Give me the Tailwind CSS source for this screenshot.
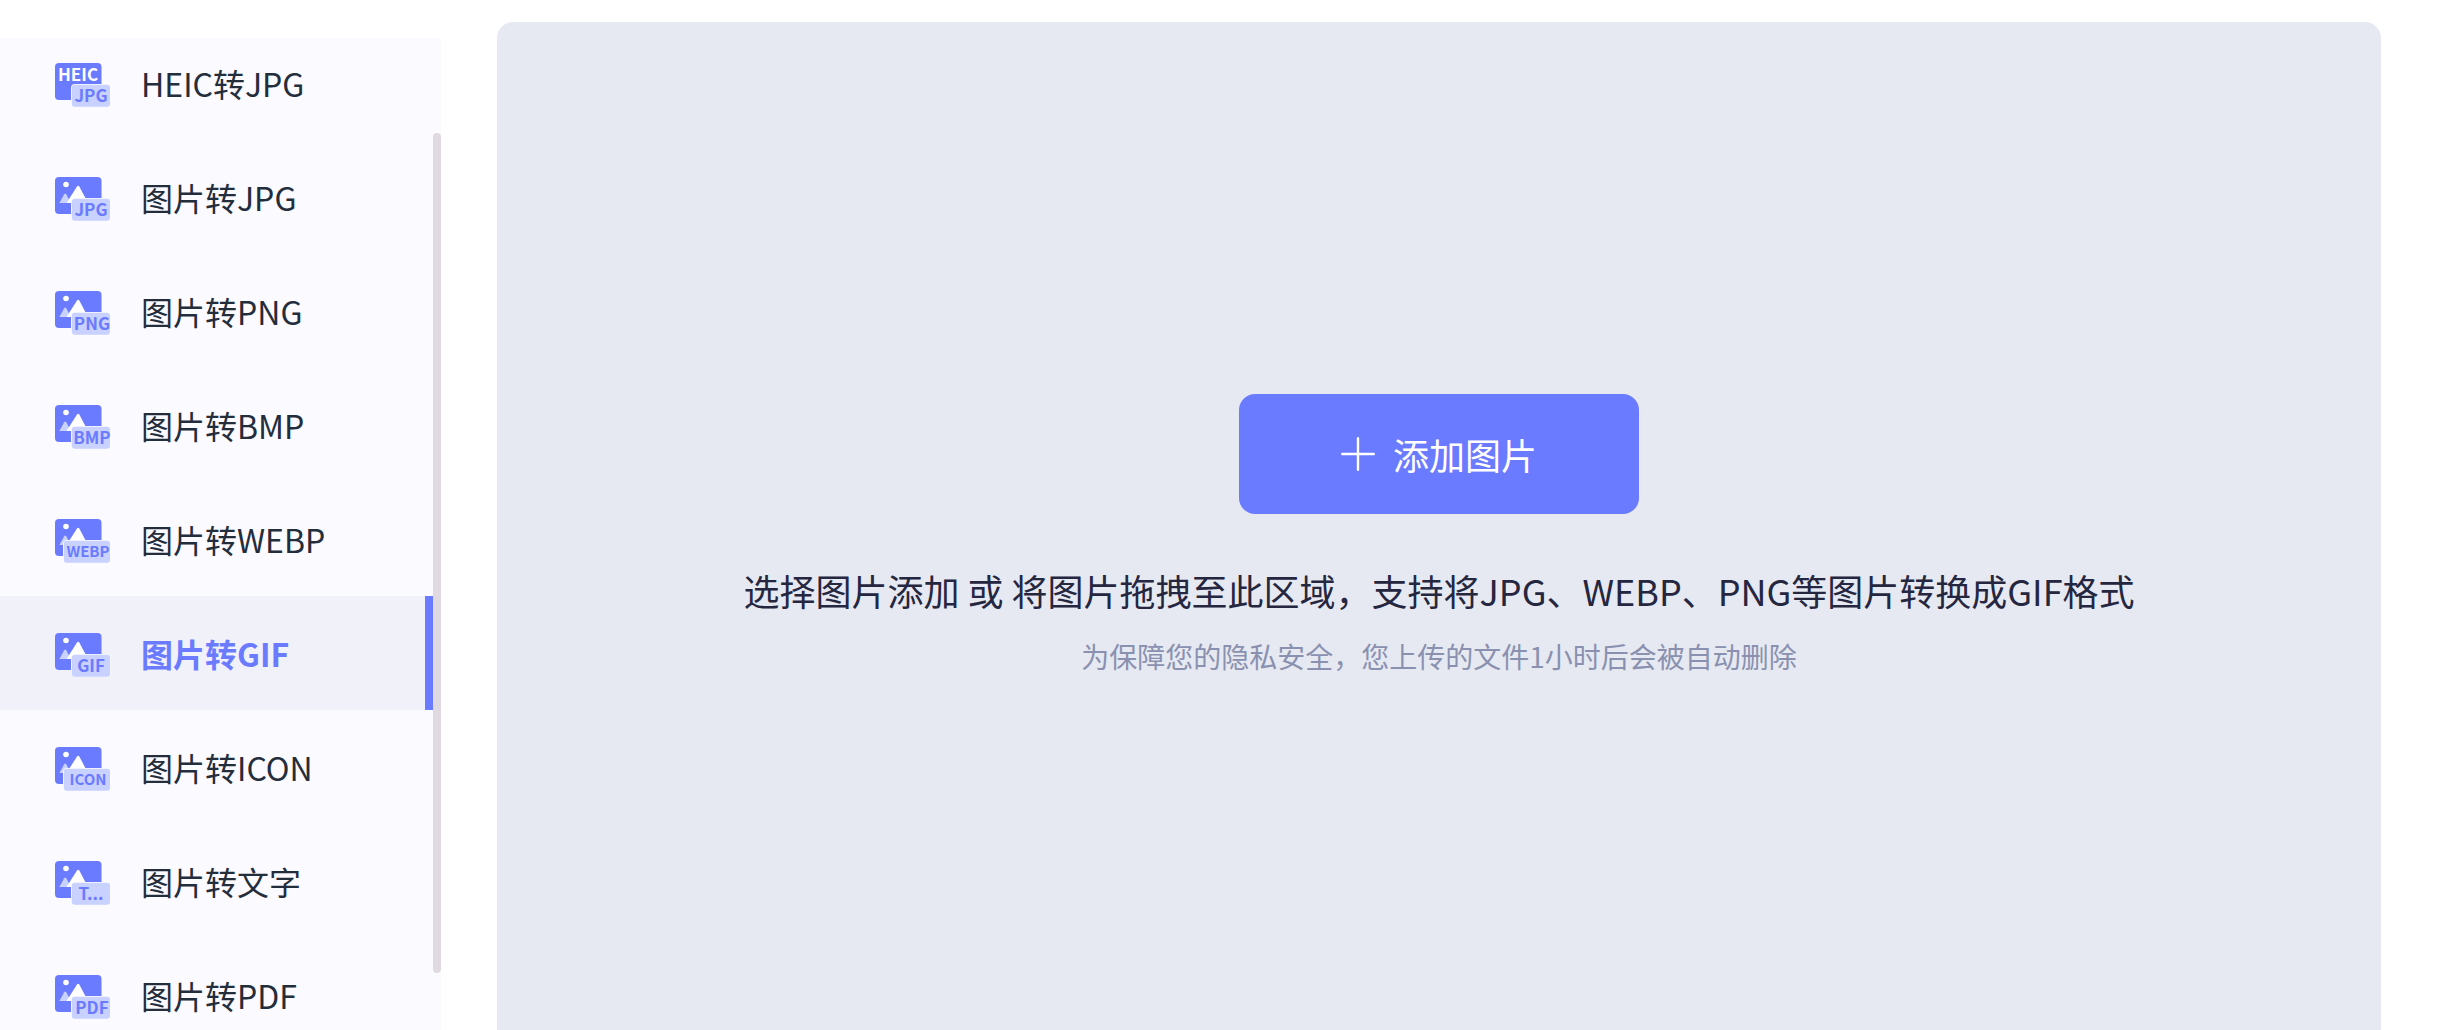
<!DOCTYPE html>
<html lang="zh-CN">
<head>
  <meta charset="UTF-8" />
  <meta name="viewport" content="width=device-width, initial-scale=1.0" />
  <title>图片转GIF</title>
  <script src="https://cdn.jsdelivr.net/npm/@tailwindcss/browser@4"></script>
</head>
<body class="flex h-screen gap-14 overflow-hidden bg-white pr-[69px] font-['Noto_Sans_CJK_SC',sans-serif]">

  <!-- Shared icon artwork -->
  <svg class="hidden" aria-hidden="true">
    <symbol id="picture" viewBox="0 0 56 48">
      <rect x="0" y="4" width="46.500" height="37" rx="4" fill="#6b7bff" />
      <circle cx="11" cy="11.500" r="2.800" fill="#fff" />
      <path d="M4.300 30 9.200 21.200Q10.200 19.600 11.200 21.200L16 30Z" fill="#c9d1ff" />
      <path d="M11.500 30 22 13.500Q23.200 12 24.300 13.500L33 30Z" fill="#fff" />
    </symbol>
    <symbol id="tag" viewBox="0 0 56 48">
      <rect x="16" y="25" width="39.500" height="23" rx="4" fill="#fbfbff" />
      <rect x="16.800" y="25.800" width="38.200" height="22" rx="3" fill="#c9d1ff" />
    </symbol>
    <symbol id="wide-tag" viewBox="0 0 56 48">
      <rect x="8" y="25" width="47.500" height="23" rx="4" fill="#fbfbff" />
      <rect x="8.800" y="25.800" width="46.200" height="22" rx="3" fill="#c9d1ff" />
    </symbol>
  </svg>

  <!-- Sidebar -->
  <aside class="relative mt-[38px] w-[441px] shrink-0 overflow-hidden bg-[#fbfaff]">
    <nav class="-mt-3 mr-2 text-[32px] text-[#242d3c]">
      <a href="#heic-jpg" class="flex h-[114px] items-center gap-[30px] pl-[55px]">
        <svg class="h-12 w-14" viewBox="0 0 56 48" font-weight="700" text-anchor="middle">
          <rect x="0" y="4" width="46.500" height="37" rx="4" fill="#6b7bff" />
          <text x="23" y="22" font-size="17" fill="#fff">HEIC</text>
          <use href="#tag" />
          <text x="36" y="43" font-size="17" fill="#6b7bff">JPG</text>
        </svg>
        HEIC转JPG
      </a>
      <a href="#jpg" class="flex h-[114px] items-center gap-[30px] pl-[55px]">
        <svg class="h-12 w-14" viewBox="0 0 56 48" font-weight="700" text-anchor="middle">
          <use href="#picture" /><use href="#tag" />
          <text x="36" y="43" font-size="17" fill="#6b7bff">JPG</text>
        </svg>
        图片转JPG
      </a>
      <a href="#png" class="flex h-[114px] items-center gap-[30px] pl-[55px]">
        <svg class="h-12 w-14" viewBox="0 0 56 48" font-weight="700" text-anchor="middle">
          <use href="#picture" /><use href="#tag" />
          <text x="37" y="43" font-size="17" fill="#6b7bff">PNG</text>
        </svg>
        图片转PNG
      </a>
      <a href="#bmp" class="flex h-[114px] items-center gap-[30px] pl-[55px]">
        <svg class="h-12 w-14" viewBox="0 0 56 48" font-weight="700" text-anchor="middle">
          <use href="#picture" /><use href="#tag" />
          <text x="37" y="43" font-size="17" fill="#6b7bff">BMP</text>
        </svg>
        图片转BMP
      </a>
      <a href="#webp" class="flex h-[114px] items-center gap-[30px] pl-[55px]">
        <svg class="h-12 w-14" viewBox="0 0 56 48" font-weight="700" text-anchor="middle">
          <use href="#picture" /><use href="#wide-tag" />
          <text x="33" y="42" font-size="15" fill="#6b7bff">WEBP</text>
        </svg>
        图片转WEBP
      </a>
      <a href="#gif" aria-current="page" class="flex h-[114px] items-center gap-[30px] border-r-8 border-[#6b7bff] bg-[#f1f1fa] pl-[55px] font-bold text-[#6b7bff]">
        <svg class="h-12 w-14" viewBox="0 0 56 48" font-weight="700" text-anchor="middle">
          <use href="#picture" /><use href="#tag" />
          <text x="36" y="43" font-size="17" fill="#6b7bff">GIF</text>
        </svg>
        图片转GIF
      </a>
      <a href="#icon" class="flex h-[114px] items-center gap-[30px] pl-[55px]">
        <svg class="h-12 w-14" viewBox="0 0 56 48" font-weight="700" text-anchor="middle">
          <use href="#picture" /><use href="#wide-tag" />
          <text x="33" y="42" font-size="15" fill="#6b7bff">ICON</text>
        </svg>
        图片转ICON
      </a>
      <a href="#text" class="flex h-[114px] items-center gap-[30px] pl-[55px]">
        <svg class="h-12 w-14" viewBox="0 0 56 48" font-weight="700" text-anchor="middle">
          <use href="#picture" /><use href="#tag" />
          <text x="36" y="43" font-size="17" fill="#6b7bff">T...</text>
        </svg>
        图片转文字
      </a>
      <a href="#pdf" class="flex h-[114px] items-center gap-[30px] pl-[55px]">
        <svg class="h-12 w-14" viewBox="0 0 56 48" font-weight="700" text-anchor="middle">
          <use href="#picture" /><use href="#tag" />
          <text x="37" y="43" font-size="17" fill="#6b7bff">PDF</text>
        </svg>
        图片转PDF
      </a>
    </nav>
    <!-- Scrollbar thumb -->
    <div class="absolute top-[95px] right-0 bottom-[57px] w-2 rounded-full bg-[#e0d9e1]"></div>
  </aside>

  <!-- Drop area -->
  <main class="mt-[22px] flex flex-1 flex-col items-center rounded-t-2xl bg-[#e6e9f1] pt-[372px]">
    <button type="button" class="flex h-[120px] w-[400px] items-center justify-center gap-[18px] rounded-2xl bg-[#6b7bff] text-4xl text-white">
      <svg class="size-[34px]" viewBox="0 0 34 34" fill="none" stroke="#fff" stroke-width="2.400" stroke-linecap="round">
        <path d="M17 1.200V32.800M1.200 17H32.800" />
      </svg>
      添加图片
    </button>
    <p class="mt-[52px] text-4xl leading-[48px] text-[#25263f]">选择图片添加 或 将图片拖拽至此区域，支持将JPG、WEBP、PNG等图片转换成GIF格式</p>
    <p class="mt-6 text-[28px] leading-9 text-[#8a91b0]">为保障您的隐私安全，您上传的文件1小时后会被自动删除</p>
  </main>

</body>
</html>
